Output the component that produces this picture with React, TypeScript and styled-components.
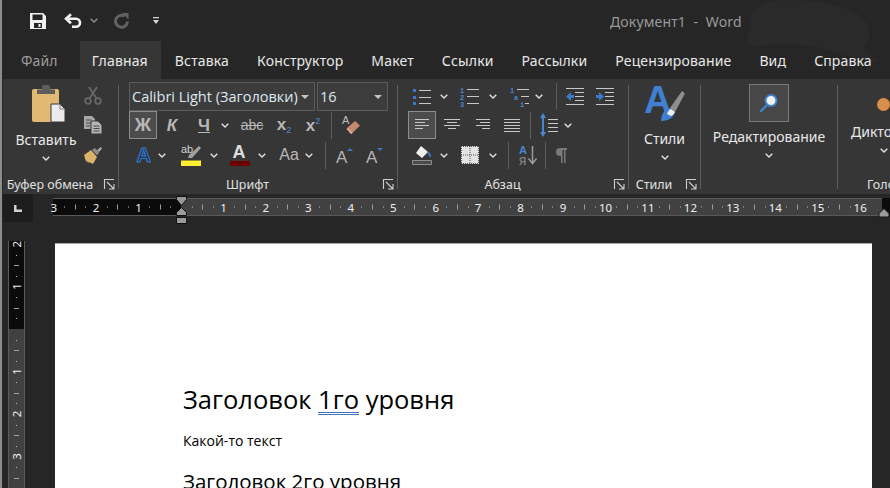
import React from 'react';
import styled, { createGlobalStyle } from 'styled-components';

const UI_FONT = '"Noto Sans", "Open Sans", sans-serif';
const BLUE = '#3c78c4';

const GlobalStyle = createGlobalStyle`
  html, body {
    margin: 0;
    padding: 0;
    background: #262626;
    overflow: hidden;
  }

  svg {
    overflow: visible;
  }
`;

const Window = styled.div`
  width: 890px;
  height: 488px;
  box-sizing: border-box;
  overflow: hidden;
  display: flex;
  flex-direction: column;
  background: #262626;
  border-left: 2px solid #8c8c8c;
  font-family: ${UI_FONT};
  color: #e8e8e8;
  position: relative;
`;

const Backdrop = styled.svg`
  position: absolute;
  top: 0;
  right: 0;
`;

const TitleBar = styled.div`
  height: 41px;
  flex: none;
  display: flex;
  align-items: center;
  padding-left: 28px;
  position: relative;
`;

const QatSlot = styled.div<{ $ml?: number }>`
  display: flex;
  margin-left: ${(p) => p.$ml ?? 0}px;
`;

const DocTitle = styled.div`
  margin-left: 451px;
  font-size: 14px;
  letter-spacing: 0.15px;
  white-space: pre;
  color: #999;
  margin-top: 1px;
`;

const Tabs = styled.div`
  height: 38px;
  flex: none;
  display: flex;
  padding-left: 5px;
  position: relative;
`;

const Tab = styled.div<{ $active?: boolean; $muted?: boolean }>`
  display: flex;
  align-items: center;
  padding: 0 ${(p) => (p.$active ? 13 : 14)}px 0 ${(p) => (p.$active ? 12 : 14)}px;
  margin-right: ${(p) => (p.$muted ? 8 : 0)}px;
  font-size: 14px;
  letter-spacing: 0.15px;
  white-space: nowrap;
  background: ${(p) => (p.$active ? '#363636' : 'transparent')};
  color: ${(p) => (p.$muted ? '#9c9c9c' : '#e8e8e8')};
`;

const Ribbon = styled.div`
  height: 115px;
  flex: none;
  display: flex;
  background: #363636;
  margin-left: 1px;
  overflow: hidden;
  position: relative;
`;

const Group = styled.div<{ $w: number; $last?: boolean }>`
  width: ${(p) => p.$w}px;
  flex: none;
  display: flex;
  flex-direction: column;
  box-sizing: border-box;
  margin: 3px 0 2px;
  padding-right: 1px;
  background: ${(p) =>
    p.$last ? 'none' : 'linear-gradient(#5c5c5c, #5c5c5c) right center / 1px 104px no-repeat'};
`;

const GroupBody = styled.div<{ $pl?: number }>`
  flex: 1;
  min-height: 0;
  display: flex;
  padding-left: ${(p) => p.$pl ?? 0}px;
`;

const GroupFooter = styled.div`
  height: 16px;
  flex: none;
  display: flex;
  align-items: center;
  padding-right: 3px;
`;

const GroupLabel = styled.div<{ $clip?: boolean }>`
  flex: 1;
  text-align: ${(p) => (p.$clip ? 'left' : 'center')};
  padding: 0 ${(p) => (p.$clip ? 0 : 7)}px 0 ${(p) => (p.$clip ? 29 : 0)}px;
  font-size: 12.5px;
  white-space: nowrap;
  color: #e0e0e0;
`;

const Stack = styled.div`
  display: flex;
  flex-direction: column;
`;

const BigButton = styled.div<{ $w: number; $ml?: number }>`
  width: ${(p) => p.$w}px;
  margin-left: ${(p) => p.$ml ?? 0}px;
  flex: none;
  display: flex;
  flex-direction: column;
  align-items: center;
`;

const BigIcon = styled.div<{ $h: number; $pt: number; $pl?: number }>`
  height: ${(p) => p.$h}px;
  padding-top: ${(p) => p.$pt}px;
  padding-left: ${(p) => p.$pl ?? 0}px;
  margin-bottom: 5px;
  display: flex;
  justify-content: center;
`;

const FindBox = styled.div`
  width: 40px;
  height: 38px;
  box-sizing: border-box;
  margin: 2px 0 5px;
  display: flex;
  align-items: center;
  justify-content: center;
  background: #474747;
  border: 1px solid #7a7a7a;
`;

const BigLabel = styled.div`
  font-size: 14px;
  line-height: 20px;
  white-space: nowrap;
  color: #e8e8e8;
`;

const SmallChevron = styled.div<{ $w?: number }>`
  height: 16px;
  ${(p) => (p.$w ? `width: ${p.$w}px;` : '')}
  display: flex;
  align-items: center;
  justify-content: center;
`;

const ToolRow = styled.div<{ $h: number; $mb?: number }>`
  display: flex;
  align-items: center;
  height: ${(p) => p.$h}px;
  margin-bottom: ${(p) => p.$mb ?? 0}px;
`;

const Tool = styled.div<{ $w: number; $ml?: number; $mt?: number; $on?: boolean }>`
  width: ${(p) => p.$w}px;
  height: 28px;
  flex: none;
  box-sizing: border-box;
  margin-left: ${(p) => p.$ml ?? 0}px;
  margin-top: ${(p) => p.$mt ?? 0}px;
  display: flex;
  align-items: center;
  justify-content: center;
  background: ${(p) => (p.$on ? '#4c4c4c' : 'transparent')};
  border: ${(p) => (p.$on ? '1px solid #8e8e8e' : 'none')};
`;

const Divider = styled.div<{ $ml: number }>`
  width: 1px;
  height: 27px;
  flex: none;
  margin-left: ${(p) => p.$ml}px;
  background: #5c5c5c;
`;

const FontSelect = styled.div<{ $w: number; $ml?: number }>`
  width: ${(p) => p.$w}px;
  height: 29px;
  box-sizing: border-box;
  margin-left: ${(p) => p.$ml ?? 0}px;
  padding: 0 5px 0 2px;
  display: flex;
  align-items: center;
  justify-content: space-between;
  border: 1px solid #5c5c5c;
  background: #3c3c3c;
  font-family: "Open Sans", sans-serif;
  font-size: 14.5px;
  white-space: nowrap;
  color: #dfe8f2;
`;

const Caret = styled.span`
  width: 0;
  height: 0;
  flex: none;
  border-left: 4px solid transparent;
  border-right: 4px solid transparent;
  border-top: 4px solid #c4c4c4;
`;

const RulerRow = styled.div`
  height: 28px;
  flex: none;
  display: flex;
  margin-left: 1px;
`;

const TabStopBox = styled.div`
  width: 30px;
  flex: none;
  display: flex;
  align-items: center;
  justify-content: center;
  background: #1d1d1d;
`;

const HorizontalRuler = styled.svg`
  display: block;
  flex: none;
  margin: 4px 0 0 20px;
  font-family: ${UI_FONT};
`;

const Workspace = styled.div`
  flex: 1;
  min-height: 0;
  display: flex;
  padding: 19px 18px 0 6px;
`;

const VerticalRuler = styled.svg`
  display: block;
  flex: none;
  font-family: ${UI_FONT};
`;

const Page = styled.div`
  flex: 1;
  margin: 2px 0 0 30px;
  box-sizing: border-box;
  padding: 130px 0 0 128px;
  background: #fff;
  border-top: 1px solid #a8a8a8;
  color: #000;
  font-family: "Open Sans", "Noto Sans", sans-serif;
`;

const Heading1 = styled.div`
  font-size: 25.5px;
  line-height: 50px;
  white-space: nowrap;
`;

const Squiggle = styled.span`
  text-decoration: underline double #3f74c0 1px;
  text-underline-offset: 3px;
  text-decoration-skip-ink: none;
`;

const BodyText = styled.div`
  font-size: 14px;
  line-height: 20px;
  margin-top: 7px;
  white-space: nowrap;
`;

const Heading2 = styled.div`
  font-size: 20.5px;
  line-height: 30px;
  margin-top: 15px;
  white-space: nowrap;
`;

const Glyph = styled.span<{
  $size?: number;
  $italic?: boolean;
  $light?: boolean;
  $strike?: boolean;
  $under?: boolean;
}>`
  font-family: "Liberation Sans", sans-serif;
  font-weight: ${(p) => (p.$light ? 400 : 700)};
  font-size: ${(p) => p.$size ?? 15}px;
  font-style: ${(p) => (p.$italic ? 'italic' : 'normal')};
  color: #b8b8b8;
  line-height: 1;
  text-decoration: ${(p) => (p.$strike ? 'line-through' : p.$under ? 'underline' : 'none')};
  white-space: nowrap;
`;

const Script = styled.span<{ $up?: boolean }>`
  font-size: 9px;
  font-weight: 400;
  color: #4a8ad8;
  vertical-align: ${(p) => (p.$up ? '7px' : '-3px')};
`;

const MicDot = styled.div`
  width: 13px;
  height: 13px;
  border-radius: 50%;
  background: #d98e4c;
  margin: 16px 0 11px 26px;
  flex: none;
`;

const LauncherSvg = styled.svg`
  flex: none;
`;

const Chevron = ({ color = '#e0e0e0' }: { color?: string }) => (
  <svg width="8" height="5" viewBox="0 0 8 5">
    <path d="M.7.7 4 4 7.300.7" fill="none" stroke={color} strokeWidth="1.400" />
  </svg>
);

const Launcher = () => (
  <LauncherSvg width="11" height="11" viewBox="0 0 11 11">
    <path d="M.5 10V.5H10M3 3l6.500 6.500M5 10h5V5" fill="none" stroke="#cfcfcf" strokeWidth="1.100" />
  </LauncherSvg>
);

const SaveIcon = () => (
  <svg width="16" height="16" viewBox="0 0 16 16">
    <path fillRule="evenodd" d="M0 0h13l3 3v13H0zM2.500 1.500V7h10V1.500zM4 10v5h8v-5z" fill="#f2f2f2" />
    <path d="M8.500 11h2v3h-2z" fill="#f2f2f2" />
  </svg>
);

const UndoIcon = () => (
  <svg width="18" height="15" viewBox="0 0 18 15">
    <path d="M7 1.200 2 5.700l5 4.500M2 5.700h10a4 4 0 0 1 0 8H8" fill="none" stroke="#f2f2f2" strokeWidth="2.600" />
  </svg>
);

const RedoIcon = () => (
  <svg width="17" height="16" viewBox="0 0 17 16">
    <path d="M11.500 3A6 6 0 1 0 14.500 8.500" fill="none" stroke="#616161" strokeWidth="3" />
    <path d="M9 0h6.500v6.500z" fill="#616161" />
  </svg>
);

const CustomizeIcon = () => (
  <svg width="6" height="7" viewBox="0 0 6 7">
    <path d="M0 0h6v1.200H0zM0 3h6L3 7z" fill="#d8d8d8" />
  </svg>
);

const PasteIcon = () => (
  <svg width="34" height="37" viewBox="0 0 34 37">
    <rect x="0" y="4" width="27" height="33" rx="2" fill="#e0b973" />
    <path d="M5 4.500h5V2a2 2 0 0 1 2-2h4a2 2 0 0 1 2 2v2.500h5V9H5z" fill="#5d5d5d" />
    <path d="M19 19h9l5 5v13H19z" fill="#ececec" stroke="#363636" />
    <path d="M28 19v5h5" fill="none" stroke="#777" />
  </svg>
);

const ScissorsIcon = () => (
  <svg width="18" height="18" viewBox="0 0 18 18">
    <g fill="none" stroke="#686868" strokeWidth="1.800">
      <circle cx="4" cy="14" r="2.800" />
      <circle cx="14" cy="14" r="2.800" />
      <path d="M5.500 11.500 13 0M12.500 11.500 5 0" />
    </g>
  </svg>
);

const CopyIcon = () => (
  <svg width="18" height="18" viewBox="0 0 18 18">
    <path d="M0 0h8l3 3v10H0z" fill="#a6a6a6" />
    <path d="M7 5h7l4 4v9H7z" fill="#b4b4b4" stroke="#363636" />
    <path d="M2 4h5M2 7h5M2 10h4M9.500 10h6M9.500 12.500h6M9.500 15h6" stroke="#4a4a4a" />
  </svg>
);

const BrushIcon = () => (
  <svg width="18" height="17" viewBox="0 0 18 17">
    <path d="M0 8 7 3l6 7-4 7-4-2-1 1-1-2-1 .5z" fill="#dcb26a" />
    <path d="M8 3l3-2 4 4.500-2 3z" fill="#8c8c8c" />
    <path d="M13 3.500 16.500 0 18 1.500 15 5z" fill="#a8a8a8" />
  </svg>
);

const EraserIcon = () => (
  <svg width="20" height="20" viewBox="0 0 20 20">
    <text x="1" y="9" fontSize="11" fontFamily="Liberation Sans" fill="#bdbdbd">A</text>
    <path d="M6 13 14 6l5 4.500-8 8H9z" fill="#c48a70" />
    <path d="M6 13.500l5 5" stroke="#e3b9a5" strokeWidth="1.200" />
  </svg>
);

const TextEffectIcon = () => (
  <svg width="20" height="20" viewBox="0 0 20 20">
    <text x="2.500" y="17" fontSize="20" fontFamily="Liberation Sans" fontWeight="700" fill="#14315a" stroke="#3c78c4" strokeWidth="1.100">A</text>
  </svg>
);

const HighlightIcon = () => (
  <svg width="22" height="24" viewBox="0 0 22 24">
    <text x="1" y="10" fontSize="11" fontFamily="Liberation Sans" fill="#cfcfcf">ab</text>
    <path d="M19 3l2 2-9 10H8l1-3z" fill="#a0a0a0" />
    <path d="M1 17.500h20V23H1z" fill="#ffef2e" />
  </svg>
);

const FontColorIcon = () => (
  <svg width="20" height="24" viewBox="0 0 20 24">
    <text x="2.500" y="15" fontSize="18" fontFamily="Liberation Sans" fontWeight="700" fill="#dcdcdc">A</text>
    <path d="M0 18h20v5H0z" fill="#6f0000" />
  </svg>
);

const GrowIcon = ({ down }: { down?: boolean }) => (
  <svg width="20" height="20" viewBox="0 0 20 20">
    <text x="1" y="18" fontSize="17" fontFamily="Liberation Sans" fill="#b4b4b4">A</text>
    <path d={down ? 'M12 3h6l-3 3z' : 'M12 6h6l-3-3z'} fill={BLUE} />
  </svg>
);

const lines = (rows: [number, number, number][]) =>
  rows.map(([x1, x2, y]) => `M${x1} ${y}H${x2}`).join('');

const BulletsIcon = () => (
  <svg width="19" height="18" viewBox="0 0 19 18">
    <path d={lines([[6, 18, 2.5], [6, 18, 9.5], [6, 18, 15.5]])} stroke="#c8c8c8" />
    <path d="M0 1h3v3H0zM0 8h3v3H0zM0 14h3v3H0z" fill={BLUE} />
  </svg>
);

const NumbersIcon = () => (
  <svg width="20" height="20" viewBox="0 0 20 20">
    <path d={lines([[7, 19, 2.5], [7, 19, 9.5], [7, 19, 16.5]])} stroke="#c8c8c8" />
    <g fontSize="7" fontFamily="Liberation Mono" fontWeight="700" fill="#4a86d0">
      <text x="0" y="6">1</text>
      <text x="0" y="13">2</text>
      <text x="0" y="20">3</text>
    </g>
  </svg>
);

const MultiLevelIcon = () => (
  <svg width="20" height="20" viewBox="0 0 20 20">
    <path d={lines([[7, 19, 2.5], [11, 19, 9.5], [15, 19, 16.5]])} stroke="#c8c8c8" />
    <g fontSize="7" fontFamily="Liberation Mono" fontWeight="700" fill="#4a86d0">
      <text x="0" y="6">1</text>
      <text x="4" y="13">a</text>
      <text x="10" y="20">i</text>
    </g>
  </svg>
);

const IndentIcon = ({ out }: { out?: boolean }) => (
  <svg width="18" height="17" viewBox="0 0 18 17">
    <path d={lines([[0, 18, 0.5], [9, 18, 4.5], [9, 18, 8.5], [9, 18, 12.5], [0, 18, 16.5]])} stroke="#c8c8c8" />
    <path d={out ? 'M0 8.500 5 4v3h3v3H5v3z' : 'M8 8.500 3 4v3H0v3h3v3z'} fill={BLUE} />
  </svg>
);

const AlignIcon = ({ rows }: { rows: [number, number, number][] }) => (
  <svg width="16" height="14" viewBox="0 0 16 14">
    <path d={lines(rows)} stroke="#c8c8c8" />
  </svg>
);

const LineSpacingIcon = () => (
  <svg width="18" height="24" viewBox="0 0 18 24">
    <path d={lines([[8, 18, 6.5], [8, 18, 10.5], [8, 18, 14.5], [8, 18, 18.5]])} stroke="#c8c8c8" />
    <path d="M3 0 6 5H4v14h2l-3 5-3-5h2V5H0z" fill="#4a86d0" />
  </svg>
);

const ShadingIcon = () => (
  <svg width="20" height="20" viewBox="0 0 20 20">
    <path d="M9 1 16 7l-6 6-6-5z" fill="#efefef" />
    <path d="M16 7c2 0 3 2 3 5-2 0-3-2-3-5z" fill={BLUE} />
    <path d="M.5 15.500h19v4H.5z" fill="#4a4a4a" stroke="#8e8e8e" />
  </svg>
);

const BordersIcon = () => (
  <svg width="18" height="18" viewBox="0 0 18 18">
    <path d="M0 0h18v18H0z" fill="#e4e4e4" />
    <path d="M0 9h18M9 0v18M.5 0v18M17.500 0v18M0 .5h18M0 17.500h18" stroke="#555" strokeDasharray="1 1" />
  </svg>
);

const SortIcon = () => (
  <svg width="18" height="21" viewBox="0 0 18 21">
    <text x="0" y="9" fontSize="11" fontWeight="700" fontFamily="Liberation Sans" fill="#4a86d0">А</text>
    <text x="0" y="20" fontSize="10" fontWeight="700" fontFamily="Liberation Sans" fill="#7d7d7d">Я</text>
    <path d="M13.500 1v17M9.500 13.500l4 5 4-5" fill="none" stroke="#9c9c9c" strokeWidth="1.500" />
  </svg>
);

const PilcrowIcon = () => (
  <svg width="12" height="15" viewBox="0 0 12 15">
    <path d="M5 0h7v2h-1.500v13H9V2H7.500v13H6V8H5A4 4 0 0 1 5 0z" fill="#7a7a7a" />
  </svg>
);

const StylesIcon = () => (
  <svg width="40" height="38" viewBox="0 0 40 38">
    <text x="-1" y="29" fontSize="38" fontWeight="700" fontFamily="Liberation Sans" fill="#3f80d0">A</text>
    <path d="M25 24 37 7l3 2.500L30 28z" fill="#8e8e8e" />
    <path d="M16 37c0-7 4-12 9-13l5 4c-1 5-6 9-14 9z" fill="#3f80d0" />
    <path d="M22 30c1-3 3-5 4-5l4 3c-1 2-2 3-4 4z" fill="#f0f0f0" />
  </svg>
);

const FindIcon = () => (
  <svg width="20" height="20" viewBox="0 0 20 20">
    <path d="M8 12 2 18" stroke="#3f80d0" strokeWidth="2.400" strokeLinecap="round" />
    <circle cx="12" cy="7.500" r="5.500" fill="#eef2f7" stroke="#3f80d0" strokeWidth="2" />
  </svg>
);

const TabStopIcon = () => (
  <svg width="8" height="7" viewBox="0 0 8 7">
    <path d="M0 0h2.500v4.500H8V7H0z" fill="#cfcfcf" />
  </svg>
);

const CM = 42.45;
const ORIGIN = 128;

const hTicks = (() => {
  const out: React.ReactNode[] = [];
  for (let i = -3; i <= 16; i++) {
    const x = ORIGIN + i * CM;
    if (i !== 0) {
      out.push(
        <text key={`n${i}`} x={x} y="13.500" fontSize="11.500" textAnchor="middle" fill="#f0f0f0">
          {Math.abs(i)}
        </text>,
      );
    }
    if (i < 16) {
      out.push(
        <rect key={`a${i}`} x={Math.round(x + CM * 0.25)} y="8.500" width="1" height="1" fill="#bbb" />,
        <rect key={`b${i}`} x={Math.round(x + CM * 0.5)} y="6.500" width="1" height="5" fill="#a0a0a0" />,
        <rect key={`c${i}`} x={Math.round(x + CM * 0.75)} y="8.500" width="1" height="1" fill="#bbb" />,
      );
    }
  }
  return out;
})();

const VORIGIN = 88;

const vTicks = (() => {
  const out: React.ReactNode[] = [];
  for (let i = -2; i <= 5; i++) {
    const y = VORIGIN + i * CM;
    if (i !== 0) {
      out.push(
        <text key={`n${i}`} transform={`translate(12.500 ${y}) rotate(-90)`} fontSize="11.500" textAnchor="middle" fill="#f0f0f0">
          {Math.abs(i)}
        </text>,
      );
    }
    out.push(
      <rect key={`a${i}`} x="8" y={Math.round(y + CM * 0.25)} width="1" height="1" fill="#bbb" />,
      <rect key={`b${i}`} x="6" y={Math.round(y + CM * 0.5)} width="5" height="1" fill="#a0a0a0" />,
      <rect key={`c${i}`} x="8" y={Math.round(y + CM * 0.75)} width="1" height="1" fill="#bbb" />,
    );
  }
  return out;
})();

export default function App() {
  return (
    <>
      <GlobalStyle />
      <Window>
        <Backdrop width="150" height="79" viewBox="0 0 150 79">
          <path
            d="M10 26C8 10 24 0 50 0s48 4 64 12 20 24 10 36l14 14-40-8C70 40 30 46 10 46 2 40 12 34 10 26z"
            fill="#2a2a2a"
          />
        </Backdrop>
        <TitleBar>
          <QatSlot><SaveIcon /></QatSlot>
          <QatSlot $ml={18}><UndoIcon /></QatSlot>
          <QatSlot $ml={8}><Chevron color="#8c8c8c" /></QatSlot>
          <QatSlot $ml={15}><RedoIcon /></QatSlot>
          <QatSlot $ml={23}><CustomizeIcon /></QatSlot>
          <DocTitle>{'Документ1  -  Word'}</DocTitle>
        </TitleBar>

        <Tabs>
          <Tab $muted>Файл</Tab>
          <Tab $active>Главная</Tab>
          <Tab>Вставка</Tab>
          <Tab>Конструктор</Tab>
          <Tab>Макет</Tab>
          <Tab>Ссылки</Tab>
          <Tab>Рассылки</Tab>
          <Tab>Рецензирование</Tab>
          <Tab>Вид</Tab>
          <Tab>Справка</Tab>
        </Tabs>

        <Ribbon>
          <Group $w={116}>
            <GroupBody>
              <BigButton $w={76} $ml={5}>
                <BigIcon $h={40} $pt={3} $pl={5}><PasteIcon /></BigIcon>
                <BigLabel>Вставить</BigLabel>
                <SmallChevron><Chevron /></SmallChevron>
              </BigButton>
              <Stack>
                <Tool $w={18}><ScissorsIcon /></Tool>
                <Tool $w={18} $mt={1}><CopyIcon /></Tool>
                <Tool $w={18} $mt={2}><BrushIcon /></Tool>
              </Stack>
            </GroupBody>
            <GroupFooter>
              <GroupLabel>Буфер обмена</GroupLabel>
              <Launcher />
            </GroupFooter>
          </Group>

          <Group $w={279}>
            <GroupBody $pl={10}>
              <Stack>
                <ToolRow $h={29}>
                  <FontSelect $w={186}>
                    Calibri Light (Заголовки)
                    <Caret />
                  </FontSelect>
                  <FontSelect $w={71} $ml={2}>
                    16
                    <Caret />
                  </FontSelect>
                </ToolRow>
                <ToolRow $h={28} $mb={2}>
                  <Tool $w={28} $on><Glyph $size={18}>Ж</Glyph></Tool>
                  <Tool $w={30}><Glyph $size={17} $italic>К</Glyph></Tool>
                  <Tool $w={34}><Glyph $size={17} $under>Ч</Glyph></Tool>
                  <Tool $w={8}><Chevron /></Tool>
                  <Tool $w={46}><Glyph $size={14} $strike $light>abc</Glyph></Tool>
                  <Tool $w={18}><Glyph $size={17}>x<Script>2</Script></Glyph></Tool>
                  <Tool $w={26} $ml={7}><Glyph $size={17}>x<Script $up>2</Script></Glyph></Tool>
                  <Divider $ml={5} />
                  <Tool $w={20} $ml={9}><EraserIcon /></Tool>
                </ToolRow>
                <ToolRow $h={28}>
                  <Tool $w={29}><TextEffectIcon /></Tool>
                  <Tool $w={8}><Chevron /></Tool>
                  <Tool $w={26} $ml={12}><HighlightIcon /></Tool>
                  <Tool $w={8} $ml={6}><Chevron /></Tool>
                  <Tool $w={24} $ml={10}><FontColorIcon /></Tool>
                  <Tool $w={8} $ml={6}><Chevron /></Tool>
                  <Tool $w={24} $ml={11}><Glyph $size={16} $light>Aa</Glyph></Tool>
                  <Tool $w={8} $ml={4}><Chevron /></Tool>
                  <Divider $ml={12} />
                  <Tool $w={20} $ml={9}><GrowIcon /></Tool>
                  <Tool $w={20} $ml={10}><GrowIcon down /></Tool>
                </ToolRow>
              </Stack>
            </GroupBody>
            <GroupFooter>
              <GroupLabel>Шрифт</GroupLabel>
              <Launcher />
            </GroupFooter>
          </Group>

          <Group $w={231}>
            <GroupBody $pl={10}>
              <Stack>
                <ToolRow $h={29}>
                  <Tool $w={20} $ml={4}><BulletsIcon /></Tool>
                  <Tool $w={8} $ml={8}><Chevron /></Tool>
                  <Tool $w={20} $ml={12}><NumbersIcon /></Tool>
                  <Tool $w={8} $ml={9}><Chevron /></Tool>
                  <Tool $w={20} $ml={13}><MultiLevelIcon /></Tool>
                  <Tool $w={8} $ml={5}><Chevron /></Tool>
                  <Divider $ml={13} />
                  <Tool $w={18} $ml={9}><IndentIcon out /></Tool>
                  <Tool $w={18} $ml={12}><IndentIcon /></Tool>
                </ToolRow>
                <ToolRow $h={28} $mb={2}>
                  <Tool $w={28} $on>
                    <AlignIcon rows={[[1, 15, 1.5], [1, 11, 4.5], [1, 15, 7.5], [1, 9, 10.5]]} />
                  </Tool>
                  <Tool $w={20} $ml={6}>
                    <AlignIcon rows={[[0, 16, 1.5], [3, 13, 4.5], [0, 16, 7.5], [4, 12, 10.5]]} />
                  </Tool>
                  <Tool $w={20} $ml={10}>
                    <AlignIcon rows={[[2, 16, 1.5], [6, 16, 4.5], [2, 16, 7.5], [8, 16, 10.5]]} />
                  </Tool>
                  <Tool $w={20} $ml={10}>
                    <AlignIcon rows={[[0, 16, 1.5], [0, 16, 4.5], [0, 16, 7.5], [0, 16, 10.5], [0, 16, 13.5]]} />
                  </Tool>
                  <Divider $ml={8} />
                  <Tool $w={18} $ml={9}><LineSpacingIcon /></Tool>
                  <Tool $w={8} $ml={6}><Chevron /></Tool>
                </ToolRow>
                <ToolRow $h={28}>
                  <Tool $w={20} $ml={4}><ShadingIcon /></Tool>
                  <Tool $w={8} $ml={8}><Chevron /></Tool>
                  <Tool $w={18} $ml={13}><BordersIcon /></Tool>
                  <Tool $w={8} $ml={10}><Chevron /></Tool>
                  <Divider $ml={11} />
                  <Tool $w={18} $ml={10}><SortIcon /></Tool>
                  <Divider $ml={8} />
                  <Tool $w={12} $ml={9}><PilcrowIcon /></Tool>
                </ToolRow>
              </Stack>
            </GroupBody>
            <GroupFooter>
              <GroupLabel>Абзац</GroupLabel>
              <Launcher />
            </GroupFooter>
          </Group>

          <Group $w={72}>
            <GroupBody>
              <BigButton $w={71}>
                <BigIcon $h={40} $pt={2}><StylesIcon /></BigIcon>
                <BigLabel>Стили</BigLabel>
                <SmallChevron><Chevron /></SmallChevron>
              </BigButton>
            </GroupBody>
            <GroupFooter>
              <GroupLabel>Стили</GroupLabel>
              <Launcher />
            </GroupFooter>
          </Group>

          <Group $w={137}>
            <GroupBody>
              <BigButton $w={136}>
                <FindBox><FindIcon /></FindBox>
                <BigLabel>Редактирование</BigLabel>
                <SmallChevron><Chevron /></SmallChevron>
              </BigButton>
            </GroupBody>
            <GroupFooter />
          </Group>

          <Group $w={60} $last>
            <GroupBody $pl={13}>
              <Stack>
                <MicDot />
                <BigLabel>Диктовка</BigLabel>
                <SmallChevron $w={66}><Chevron /></SmallChevron>
              </Stack>
            </GroupBody>
            <GroupFooter>
              <GroupLabel $clip>Голос</GroupLabel>
            </GroupFooter>
          </Group>
        </Ribbon>

        <RulerRow>
          <TabStopBox><TabStopIcon /></TabStopBox>
          <HorizontalRuler width="837" height="18" viewBox="0 0 837 18">
            <rect x="0" y="0" width="128" height="18" fill="#0b0b0b" />
            <rect x="128" y="0" width="701" height="18" fill="#414141" />
            <rect x="829" y="0" width="8" height="18" fill="#0b0b0b" />
            <path d="M0 .5H829M0 17.500H829" stroke="#5a5a5a" />
            {hTicks}
            <g stroke="#111" fill="#9a9a9a">
              <path d="M123.500 -1.500h10v3l-5 6-5-6z" />
              <path d="M128.500 9.500l5 5v3h-10v-3z" />
              <path d="M123.500 19.500h10v6h-10z" />
            </g>
            <path d="M831 10.500l5 5v3.500h-10v-3.500z" fill="#9a9a9a" stroke="#111" />
          </HorizontalRuler>
        </RulerRow>

        <Workspace>
          <VerticalRuler width="17" height="250" viewBox="0 0 17 250">
            <rect x="0" y="0" width="17" height="88" fill="#0b0b0b" />
            <rect x="0" y="88" width="17" height="162" fill="#414141" />
            <path d="M.5 0V250M16.500 0V250" stroke="#5a5a5a" />
            {vTicks}
          </VerticalRuler>
          <Page>
            <Heading1>Заголовок <Squiggle>1го</Squiggle> уровня</Heading1>
            <BodyText>Какой-то текст</BodyText>
            <Heading2>Заголовок 2го уровня</Heading2>
          </Page>
        </Workspace>
      </Window>
    </>
  );
}
